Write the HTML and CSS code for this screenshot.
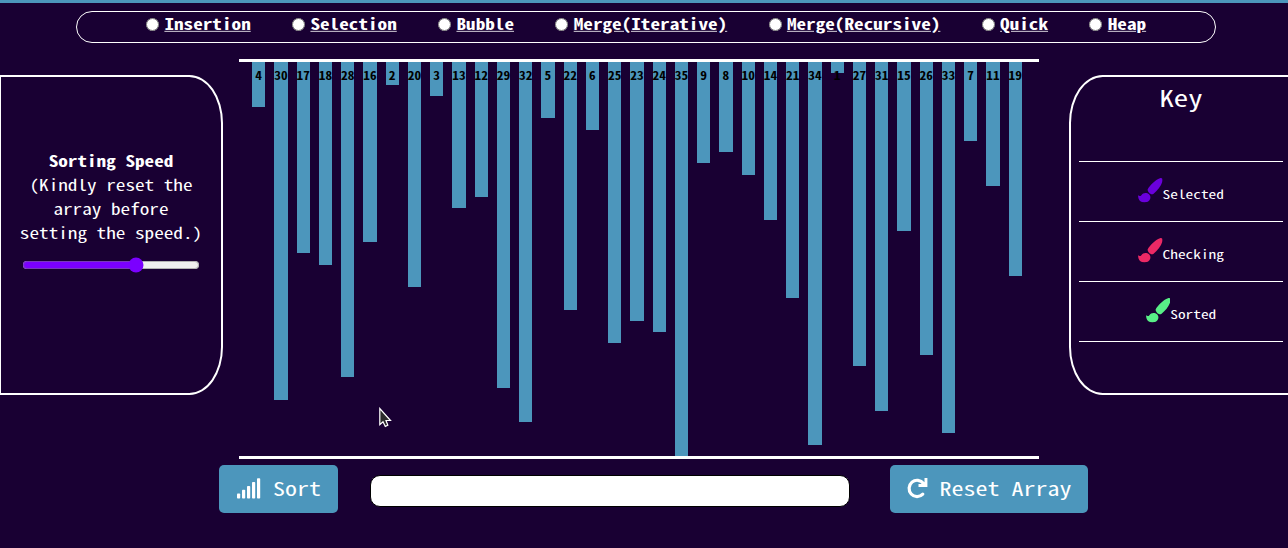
FILE: index.html
```html
<!DOCTYPE html>
<html lang="en">
<head>
<meta charset="utf-8">
<title>Sorting Visualizer</title>
<link rel="stylesheet" href="styles.css">
</head>
<body>
<nav class="algorithms">
  <label class="option"><input type="radio" name="algo"><span class="name">Insertion</span></label>
  <label class="option"><input type="radio" name="algo"><span class="name">Selection</span></label>
  <label class="option"><input type="radio" name="algo"><span class="name">Bubble</span></label>
  <label class="option"><input type="radio" name="algo"><span class="name">Merge(Iterative)</span></label>
  <label class="option"><input type="radio" name="algo"><span class="name">Merge(Recursive)</span></label>
  <label class="option"><input type="radio" name="algo"><span class="name">Quick</span></label>
  <label class="option"><input type="radio" name="algo"><span class="name">Heap</span></label>
</nav>
<main class="stage">
  <section class="panel speed">
    <div class="speed-text"><div><b>Sorting Speed</b></div><div>(Kindly reset the</div><div>array before</div><div>setting the speed.)</div></div>
    <input class="slider" type="range" min="0" max="1000" value="654">
  </section>
  <section class="bars" id="bars"></section>
  <section class="panel key">
    <h2 class="key-title"><span class="key-heading">Key</span></h2>
    <div class="key-row selected"><svg class="brush" viewBox="0 0 24 24"><use href="#brush"/></svg><span class="key-name">Selected</span></div>
    <div class="key-row checking"><svg class="brush" viewBox="0 0 24 24"><use href="#brush"/></svg><span class="key-name">Checking</span></div>
    <div class="key-row sorted"><svg class="brush" viewBox="0 0 24 24"><use href="#brush"/></svg><span class="key-name">Sorted</span></div>
  </section>
</main>
<footer class="controls">
  <button class="btn sort"><svg class="signal" viewBox="0 0 25 21"><g><rect x="1" y="15.500" width="3.200" height="5" rx=".8"/><rect x="6" y="11.800" width="3.200" height="8.700" rx=".8"/><rect x="11" y="8" width="3.200" height="12.500" rx=".8"/><rect x="16" y="4" width="3.200" height="16.500" rx=".8"/><rect x="21" y=".3" width="3.200" height="20.200" rx=".8"/></g></svg><span class="btn-text">Sort</span></button>
  <div class="message"></div>
  <button class="btn reset"><svg class="redo" viewBox="0 0 20 20"><path class="arc" d="M16.500 5.500A8 8.200 0 1 0 15.800 16.200"/><path class="head" d="M17.500 0H20.400V9H11.500V6H14.500L17.500 4Z"/></svg><span class="btn-text">Reset Array</span></button>
</footer>
<svg class="cursor" viewBox="0 0 14 21"><path d="M.8 1.500V17.700L4 14.800L6.300 19.400L8.800 18.300L7 13.500H11.500Z"/></svg>
<svg class="defs"><symbol id="brush" viewBox="0 0 24 24"><path d="M21.500.3C23.500-.5 24.600 1 24 3.300C22.500 8.500 19 12.500 15 15.600C12.500 17 9 13.500 9.500 11C11.500 7.500 17 1.800 21.500.3Z"/><path d="M.1 16.800C1 17.800 2.400 18 3.300 16.800C5 14 9 14.200 10.800 16C12.800 18 12.500 20.800 10.500 22.500C8 24.500 4 24.300 2 22.500C.8 21.500 0 19.500.1 16.800Z"/></symbol></svg>
<script src="bars.js"></script>
</body>
</html>
```
FILE: styles.css
```css
* { box-sizing: border-box; }
body {
  margin: 0;
  height: 548px;
  overflow: hidden;
  border-top: 3px solid #4c96bc;
  background: #190033;
  color: #fff;
  font-family: "Noto Sans Mono CJK SC", "DejaVu Sans Mono", monospace;
  font-size: 19.2px;
  line-height: 24px;
}
.name, .speed-text div, .key-heading, .key-name, .btn-text, .bar-value {
  display: block;
  white-space: nowrap;
  transform: scaleY(.8);
}
.algorithms {
  display: flex;
  gap: 41.3px;
  width: 1140px;
  height: 32px;
  margin: 8px 0 0 76px;
  padding: 0 0 5px 69px;
  border: 1px solid #fff;
  border-radius: 16px;
  align-items: center;
}
.option { display: flex; align-items: center; gap: 5.4px; }
.option input { margin: 0; width: 13px; height: 13px; }
.name { font-weight: 700; text-decoration: underline; line-height: 20px; margin-top: -6px; transform-origin: 0 92%; }
.stage {
  display: grid;
  grid-template-columns: 223px 800px 224px;
  justify-content: start;
  height: 400px;
  margin-top: 16px;
}
.panel { height: 320px; margin-top: 16px; border: 2px solid #fff; }
.speed {
  width: 224px;
  margin-left: -1px;
  border-radius: 0 15% 15% 0;
  text-align: center;
  padding-top: 70px;
}
.speed-text div { transform-origin: 0 85%; }
.slider { display: block; width: 178px; height: 16px; margin: 14px 0 0 21px; accent-color: #7b00ff; }
.bars {
  display: flex;
  gap: 8.93px;
  align-items: flex-start;
  width: 800px;
  margin-left: 16px;
  padding-left: 13px;
  border-top: 3px solid #fff;
  border-bottom: 3px solid #fff;
}
.bar {
  width: 13.33px;
  flex: none;
  padding-top: 6px;
  background: #4c96bc;
  color: #000;
  font-size: 13.33px;
  font-weight: 700;
  line-height: 14px;
  text-align: center;
}
.bar-value { transform: scaleY(.88); transform-origin: 0 92%; }
.key { margin-left: 46px; padding: 0 8px; border-radius: 15% 0 0 15%; width: 224px; }
.key-title { margin: 0; height: 85px; padding-top: 3px; font-size: 28.8px; font-weight: 400; line-height: 30px; text-align: center; border-bottom: 1px solid #fff; }
.key-heading { transform-origin: 0 92%; }
.key-row { display: flex; justify-content: center; height: 60px; padding-top: 16px; border-bottom: 1px solid #fff; }
.brush { width: 24.5px; height: 24.5px; fill: currentColor; }
.key-name { color: #fff; font-size: 15.36px; margin-top: 2px; line-height: 24px; height: 24px; transform-origin: 0 78%; }
.selected { color: #6a00dc; border-color: #fff; }
.checking { color: #ec2965; border-color: #fff; }
.sorted { color: #58ef87; border-color: #fff; }
.controls { display: flex; margin: 6px 0 0 219px; }
.btn {
  display: flex;
  align-items: center;
  flex: none;
  height: 48px;
  padding: 0 17px;
  border: 0;
  border-radius: 5px;
  background: #4c96bc;
  color: #fff;
  font-family: inherit;
  font-size: 24px;
  line-height: 28px;
}
.sort { width: 119px; }
.btn-text { margin-top: -6px; transform-origin: 0 87%; }
.signal { flex: none; width: 25px; height: 21px; margin-right: 12px; margin-top: -1px; fill: #fff; }
.message { flex: none; width: 480px; height: 32px; margin: 10px 40px 0 32px; border: 1px solid #000; border-radius: 10px; background: #fff; }
.reset { width: 198px; }
.redo { flex: none; width: 20px; height: 20px; margin-right: 12.500px; margin-top: -2px; overflow: visible; }
.arc { fill: none; stroke: #fff; stroke-width: 3.2; stroke-linecap: round; }
.head { fill: #fff; }
.cursor { position: absolute; left: 379px; top: 407px; width: 14px; height: 21px; fill: #2b2b2b; stroke: #fff; stroke-width: 1.2; }
.defs { position: absolute; width: 0; height: 0; }
```
FILE: bars.js
```js
const values = [4, 30, 17, 18, 28, 16, 2, 20, 3, 13, 12, 29, 32, 5, 22, 6, 25, 23, 24, 35, 9, 8, 10, 14, 21, 34, 1, 27, 31, 15, 26, 33, 7, 11, 19];
const bars = document.getElementById("bars");
for (const value of values) {
  const bar = document.createElement("div");
  const label = document.createElement("span");
  bar.className = "bar";
  label.className = "bar-value";
  label.textContent = value;
  bar.style.height = (value / 35 * 100) + "%";
  bar.appendChild(label);
  bars.appendChild(bar);
}
```
